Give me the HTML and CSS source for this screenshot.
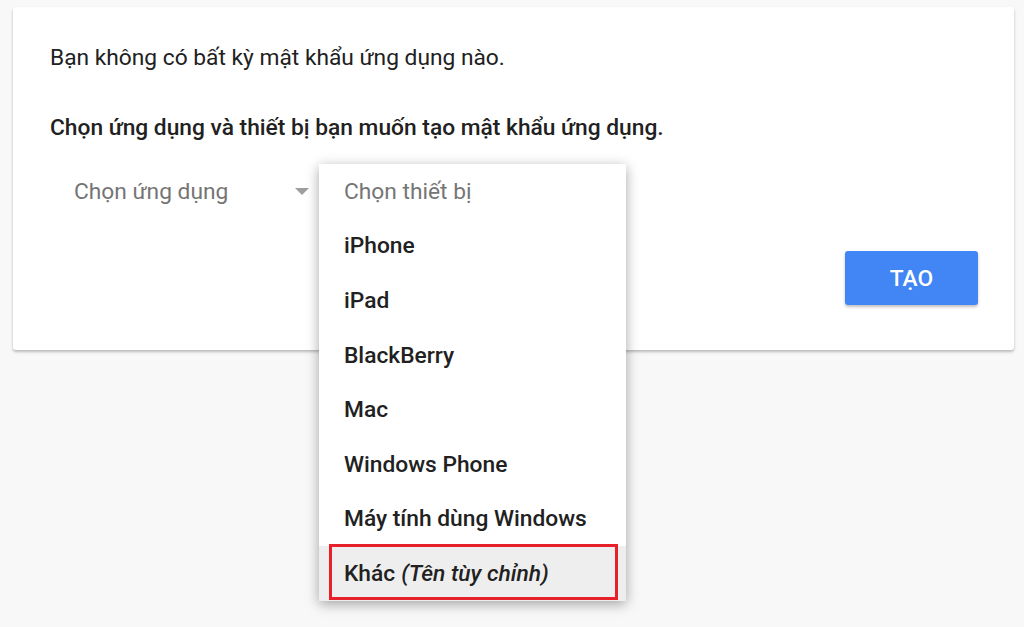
FILE: index.html
```html
<!DOCTYPE html>
<html lang="vi">
<head>
    <meta charset="UTF-8">
    <meta name="viewport" content="width=device-width, initial-scale=1.0">
    <title>Mật khẩu ứng dụng</title>
    <link rel="stylesheet" href="styles.css">
</head>
<body>
    <div class="card">
        <p class="empty-msg">Bạn không có bất kỳ mật khẩu ứng dụng nào.</p>
        <p class="prompt">Chọn ứng dụng và thiết bị bạn muốn tạo mật khẩu ứng dụng.</p>

        <div class="picker-row">
            <div class="select">
                <span>Chọn ứng dụng</span>
                <span class="arrow"></span>
            </div>

            <div class="menu">
                <div class="menu-item placeholder">Chọn thiết bị</div>
                <div class="menu-item">iPhone</div>
                <div class="menu-item">iPad</div>
                <div class="menu-item">BlackBerry</div>
                <div class="menu-item">Mac</div>
                <div class="menu-item">Windows Phone</div>
                <div class="menu-item">Máy tính dùng Windows</div>
                <div class="menu-item active">Khác <em>(Tên tùy chỉnh)</em><span class="mark"></span></div>
            </div>
        </div>

        <div class="actions">
            <button type="button">TẠO</button>
        </div>
    </div>
</body>
</html>
```

FILE: styles.css
```css
html {
    height: 100%;
}

body {
    font-family: Roboto, "Noto Sans", Arial, sans-serif;
    background: #f8f8f8;
    margin: 0;
    min-height: 100%;
    box-sizing: border-box;
    padding: 7px 10px 0 13px;
    color: #212121;
}

.card {
    background: #fff;
    border-radius: 3px;
    box-shadow: 0 2px 3px rgba(0, 0, 0, 0.25);
    padding: 38px 36px 45px 37px;
}

p {
    margin: 0;
    font-size: 22.75px;
    line-height: 26px;
}

.prompt {
    margin-top: 44px;
    font-weight: 500;
}

.picker-row {
    position: relative;
    margin-top: 23px;
    height: 54px;
}

.select {
    width: 269px;
    height: 54px;
    box-sizing: border-box;
    padding: 0 10px 0 24px;
    display: flex;
    align-items: center;
    justify-content: space-between;
    font-size: 22.75px;
    color: #757575;
}

.arrow {
    width: 0;
    height: 0;
    border-left: 7px solid transparent;
    border-right: 7px solid transparent;
    border-top: 7px solid #9e9e9e;
    margin-top: 1px;
}

.menu {
    position: absolute;
    left: 269px;
    top: 0;
    width: 307px;
    background: #fff;
    box-shadow: 0 3px 12px rgba(0, 0, 0, 0.35);
    z-index: 10;
}

.menu-item {
    position: relative;
    height: 54.6px;
    padding-left: 25px;
    display: flex;
    align-items: center;
    font-size: 22.75px;
    font-weight: 500;
    color: #212121;
}

.menu-item.placeholder {
    color: #757575;
    font-weight: 400;
}

.menu-item em {
    margin-left: 6px;
}

.menu-item.active {
    background: #eeeeee;
}

.mark {
    position: absolute;
    top: -2px;
    bottom: 1px;
    left: 10px;
    right: 8px;
    border: 3px solid #e8202a;
}

.actions {
    display: flex;
    justify-content: flex-end;
    margin-top: 33px;
}

button {
    width: 133px;
    height: 54px;
    background: #4285f4;
    color: #fff;
    border: none;
    border-radius: 3px;
    font-family: inherit;
    font-size: 22.75px;
    font-weight: 500;
    box-shadow: 0 2px 3px rgba(0, 0, 0, 0.25);
    cursor: pointer;
}
```
